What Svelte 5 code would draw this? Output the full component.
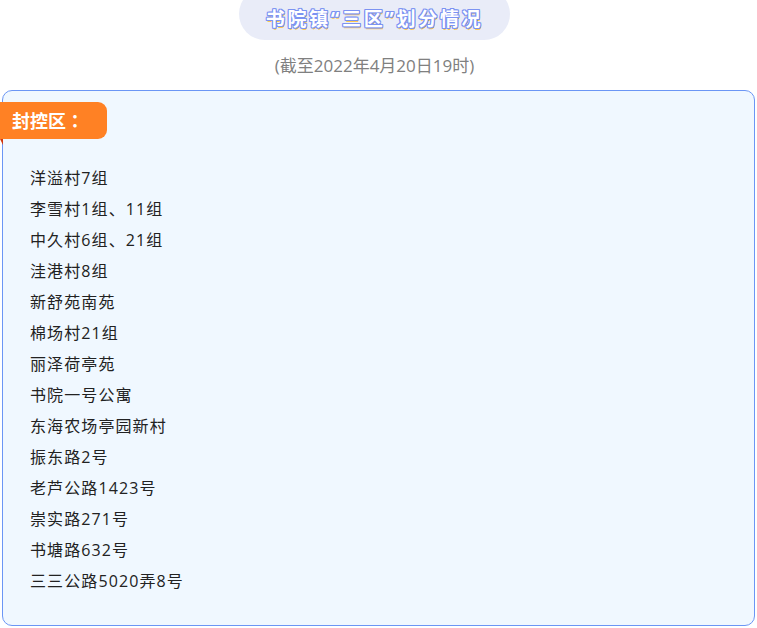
<script>
  const places = [
    '洋溢村7组',
    '李雪村1组、11组',
    '中久村6组、21组',
    '洼港村8组',
    '新舒苑南苑',
    '棉场村21组',
    '丽泽荷亭苑',
    '书院一号公寓',
    '东海农场亭园新村',
    '振东路2号',
    '老芦公路1423号',
    '崇实路271号',
    '书塘路632号',
    '三三公路5020弄8号'
  ];
</script>

<div class="page">
  <div class="head">
    <h1 class="title">书院镇“三区”划分情况</h1>
  </div>
  <p class="date">(截至2022年4月20日19时)</p>

  <section class="card">
    <div class="tag">封控区：</div>
    <ul class="list">
      {#each places as place}
        <li>{place}</li>
      {/each}
    </ul>
  </section>
</div>

<style>
  :global(body) {
    background: #fff;
  }

  .page {
    width: 757px;
    height: 628px;
    overflow: hidden;
    font-family: "Open Sans", "Noto Sans CJK SC", sans-serif;
  }

  .head {
    display: flex;
    justify-content: center;
  }

  .title {
    width: 271px;
    height: 52px;
    margin: -12px 0 0 -8px;
    padding-top: 12px;
    box-sizing: border-box;
    border-radius: 26px;
    background: #e9ecf8;
    color: #fff;
    font-size: 19px;
    font-weight: 700;
    letter-spacing: 2.7px;
    line-height: 39px;
    text-align: center;
    text-shadow:
      -1px 0 0 #7c93f2, 1px 0 0 #7c93f2, 0 -1px 0 #7c93f2, 0 1px 0 #7c93f2,
      -1px -1px 0 #7c93f2, 1px -1px 0 #7c93f2, -1px 1px 0 #7c93f2, 1px 1px 0 #7c93f2,
      1px 2px 0 #ffc94d;
  }

  .date {
    margin: 14px 0 0;
    color: #808080;
    font-size: 17px;
    line-height: 24px;
    text-align: center;
    padding-right: 8px;
  }

  .card {
    position: relative;
    box-sizing: border-box;
    width: 753px;
    height: 536px;
    margin: 12px 0 0 2px;
    padding: 72px 0 0 27px;
    border: 1px solid #6b96f5;
    border-radius: 10px;
    background: #f0f8ff;
  }

  .tag {
    position: absolute;
    left: -3px;
    top: 11px;
    width: 107px;
    height: 37px;
    padding-left: 12px;
    box-sizing: border-box;
    border-radius: 0 9px 9px 0;
    background: #ff8124;
    color: #fff;
    font-family: "Noto Sans CJK TC", sans-serif;
    font-size: 18px;
    font-weight: 700;
    line-height: 37px;
  }

  .tag::after {
    content: "";
    position: absolute;
    left: 0;
    top: 37px;
    border-top: 6px solid #d4380d;
    border-left: 3px solid transparent;
  }

  .list {
    margin: 0;
    padding: 0;
    list-style: none;
    color: #222;
    font-size: 16px;
    letter-spacing: 1.1px;
    line-height: 31px;
  }
</style>
